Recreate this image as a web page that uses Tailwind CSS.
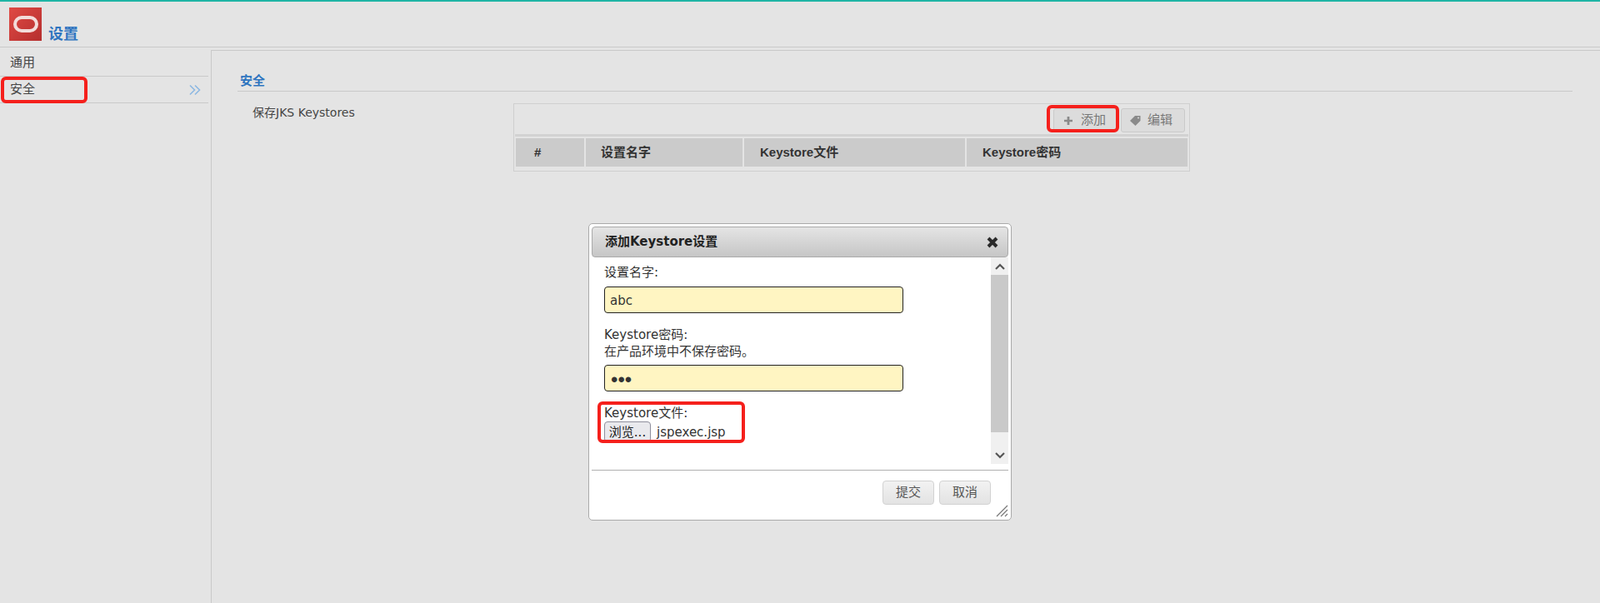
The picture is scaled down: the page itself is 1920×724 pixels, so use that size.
<!DOCTYPE html>
<html lang="zh-CN">
<head>
  <meta charset="UTF-8" />
  <title>设置</title>
  <script src="https://cdn.jsdelivr.net/npm/@tailwindcss/browser@4"></script>
</head>
<body class="relative w-[1920px] h-[724px] overflow-hidden bg-[#e4e4e4] text-[#333] font-['DejaVu_Sans','Noto_Sans_CJK_SC',sans-serif] text-[15px]">

  <!-- header -->
  <header class="h-[57px] border-t-2 border-b border-t-[#1fb5a5] border-b-[#c9c9c9] flex items-start pl-[11px] pt-[7px]">
    <div class="w-[39px] h-[40px] bg-gradient-to-br from-[#e04a44] to-[#b52e2e] flex items-center justify-center">
      <div class="w-[30px] h-[20px] rounded-[10px] border-[4px] border-[#f3dcda]"></div>
    </div>
    <h1 class="ml-[8px] mt-[22px] text-[18px] leading-[20px] font-bold text-[#2f75c0]">设置</h1>
  </header>

  <div class="flex h-[667px]">
    <!-- sidebar -->
    <nav class="w-[250px] shrink-0 pt-[2px]">
      <div class="h-[33px] border-b border-[#c9c9c9] pl-[12px] leading-[32px] text-[#444]">通用</div>
      <div class="h-[32px] border-b border-[#c9c9c9] pl-[12px] pr-[9px] leading-[31px] text-[#444] flex justify-between items-center">
        <span>安全</span>
        <svg width="14" height="14" viewBox="0 0 14 14" fill="none" stroke="#8db8e2" stroke-width="1.6"><path d="M1 1.5 6.5 7 1 12.5M7 1.5 12.5 7 7 12.5"/></svg>
      </div>
    </nav>

    <!-- main -->
    <main class="ml-[3px] mt-[3px] flex-1 border-l border-t border-[#c9c9c9] pl-[31px] pr-[33px]">
      <div class="mt-[27px] pl-[3px] h-[22px] border-b border-[#c9c9c9] text-[15px] leading-[18px] font-bold text-[#2f75c0]">安全</div>
      <div class="flex mt-[14px]">
        <div class="w-[331px] pl-[18px] pt-[2px] text-[14px] leading-[18px] text-[#444]">保存JKS Keystores</div>
        <div class="w-[812px] h-[82px] border border-[#cfcfcf] p-px">
          <div class="h-[38px] border-b-[3px] border-[#d2d2d2] flex justify-end gap-[5px] pr-[4px] pt-[4px]">
            <button class="w-[76px] h-[29px] bg-[#dcdcdc] border border-[#cacaca] rounded-[3px] text-[15px] text-[#777] flex items-center justify-center gap-[10px] whitespace-nowrap">
              <svg class="shrink-0" width="10" height="10" viewBox="0 0 11 11" fill="#8a8a8a"><path d="M4 0h3v4h4v3H7v4H4V7H0V4h4z"/></svg>添加
            </button>
            <button class="w-[77px] h-[29px] pr-[4px] bg-[#dcdcdc] border border-[#cacaca] rounded-[3px] text-[15px] text-[#777] flex items-center justify-center gap-[8px] whitespace-nowrap">
              <svg class="shrink-0" width="13" height="13" viewBox="0 0 13 13" fill="#8a8a8a"><path d="M6 1h6.5v6L6.5 13 0 7z"/><circle cx="10" cy="3.6" r="1" fill="#dcdcdc"/></svg>编辑
            </button>
          </div>
          <div class="flex gap-[2px] mt-[2px] mx-px h-[34px] font-['Liberation_Sans','Noto_Sans_CJK_SC',sans-serif] text-[15px] font-bold text-[#333] leading-[34px]">
            <div class="w-[82px] bg-[#cbcbcb] pl-[22px]">#</div>
            <div class="w-[188px] bg-[#cbcbcb] pl-[18px]">设置名字</div>
            <div class="w-[265px] bg-[#cbcbcb] pl-[19px]">Keystore文件</div>
            <div class="flex-1 bg-[#cbcbcb] pl-[19px]">Keystore密码</div>
          </div>
        </div>
      </div>
    </main>
  </div>

  <!-- add keystore dialog -->
  <section class="absolute left-[706px] top-[268px] w-[508px] h-[357px] bg-white border border-[#aaa] rounded-[5px] p-[3px] flex flex-col">
    <div class="h-[37px] shrink-0 border border-[#aaa] rounded-[4px] bg-gradient-to-b from-[#e4e4e4] to-[#c6c6c6] pl-[15px] pr-[11px] flex items-center justify-between">
      <span class="text-[15px] font-bold text-[#222]">添加Keystore设置</span>
      <svg width="14" height="14" viewBox="0 0 14 14" stroke="#2a2a2a" stroke-width="4"><path d="M2 2l10 10M12 2 2 12"/></svg>
    </div>
    <div class="h-[248px] shrink-0 flex">
      <form class="flex-1 pl-[15px] text-[15px] leading-[20px] text-[#333]">
        <div class="mt-[8px]">设置名字:</div>
        <input type="text" value="abc" class="block mt-[7px] w-[359px] h-[32px] px-[6px] pt-[2px] rounded-[4px] border border-[#222] bg-[#fff5c2] text-[15px]" />
        <div class="mt-[16px]">Keystore密码:</div>
        <div>在产品环境中不保存密码。</div>
        <input type="password" value="abc" class="block mt-[6px] w-[359px] h-[32px] pl-[7px] pr-[6px] pt-[4px] rounded-[4px] border border-[#222] bg-[#fff5c2] font-['Liberation_Sans',sans-serif] text-[24px]" />
        <div class="mt-[16px]">Keystore文件:</div>
        <div class="flex items-center h-[25px]">
          <button type="button" class="w-[56px] h-[25px] bg-[#e9e9ed] border border-[#8f8f9d] rounded-[4px] text-[15px] text-[#222] whitespace-nowrap">浏览...</button>
          <span class="ml-[7px] text-[#333]">jspexec.jsp</span>
        </div>
      </form>
      <div class="w-[21px] flex flex-col bg-[#f0f0f0]">
        <div class="h-[21px] flex items-center justify-center">
          <svg width="12" height="8" viewBox="0 0 12 8" fill="none" stroke="#555" stroke-width="2.2"><path d="M1 7l5-5 5 5"/></svg>
        </div>
        <div class="h-[189px] bg-[#c9c9c9]"></div>
        <div class="flex-1 flex items-end justify-center pb-[6px]">
          <svg width="12" height="8" viewBox="0 0 12 8" fill="none" stroke="#555" stroke-width="2.2"><path d="M1 1l5 5 5-5"/></svg>
        </div>
      </div>
    </div>
    <div class="relative flex-1 mt-[7px] border-t border-[#b0b0b0] flex justify-end gap-[6px] pt-[12px] pr-[21px]">
      <button class="w-[62px] h-[29px] border border-[#d2d2d2] rounded-[4px] bg-gradient-to-b from-[#f2f2f2] to-[#e3e3e3] text-[15px] text-[#555]">提交</button>
      <button class="w-[62px] h-[29px] border border-[#d2d2d2] rounded-[4px] bg-gradient-to-b from-[#f2f2f2] to-[#e3e3e3] text-[15px] text-[#555]">取消</button>
      <svg class="absolute right-0 bottom-0" width="15" height="15" viewBox="0 0 15 15" stroke="#777" stroke-width="1.2"><path d="M1 14 14 1M6 14l8-8M11 14l3-3"/></svg>
    </div>
  </section>

  <!-- red annotation boxes -->
  <div class="absolute left-[1px] top-[92px] w-[104px] h-[32px] border-[4px] border-[#f5201c] rounded-[6px]"></div>
  <div class="absolute left-[1256px] top-[126px] w-[87px] h-[33px] border-[4px] border-[#f5201c] rounded-[6px]"></div>
  <div class="absolute left-[717px] top-[482px] w-[177px] h-[50px] border-[4px] border-[#f5201c] rounded-[6px]"></div>
</body>
</html>
